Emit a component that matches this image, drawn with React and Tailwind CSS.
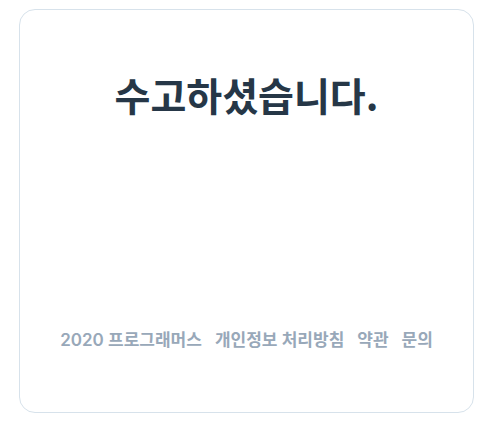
export default function App() {
  const links = ["개인정보 처리방침", "약관", "문의"];

  return (
    <div className="min-h-screen bg-white px-[19px] pt-[9px] font-['Noto_Sans_CJK_KR','Noto_Sans',sans-serif]">
      <div className="flex h-[404px] flex-col items-center rounded-2xl border border-[#d7e2eb] bg-white">
        <h1 className="mt-[55px] text-[39px] font-bold leading-[58px] text-[#263747]">
          수고하셨습니다.
        </h1>
        <div className="mt-auto mb-[59px] flex gap-[13px] font-['Inter','Noto_Sans_CJK_KR',sans-serif] text-[17px] font-semibold text-[#98a8b9]">
          <span>2020 프로그래머스</span>
          {links.map((l) => (
            <span key={l}>{l}</span>
          ))}
        </div>
      </div>
    </div>
  );
}
